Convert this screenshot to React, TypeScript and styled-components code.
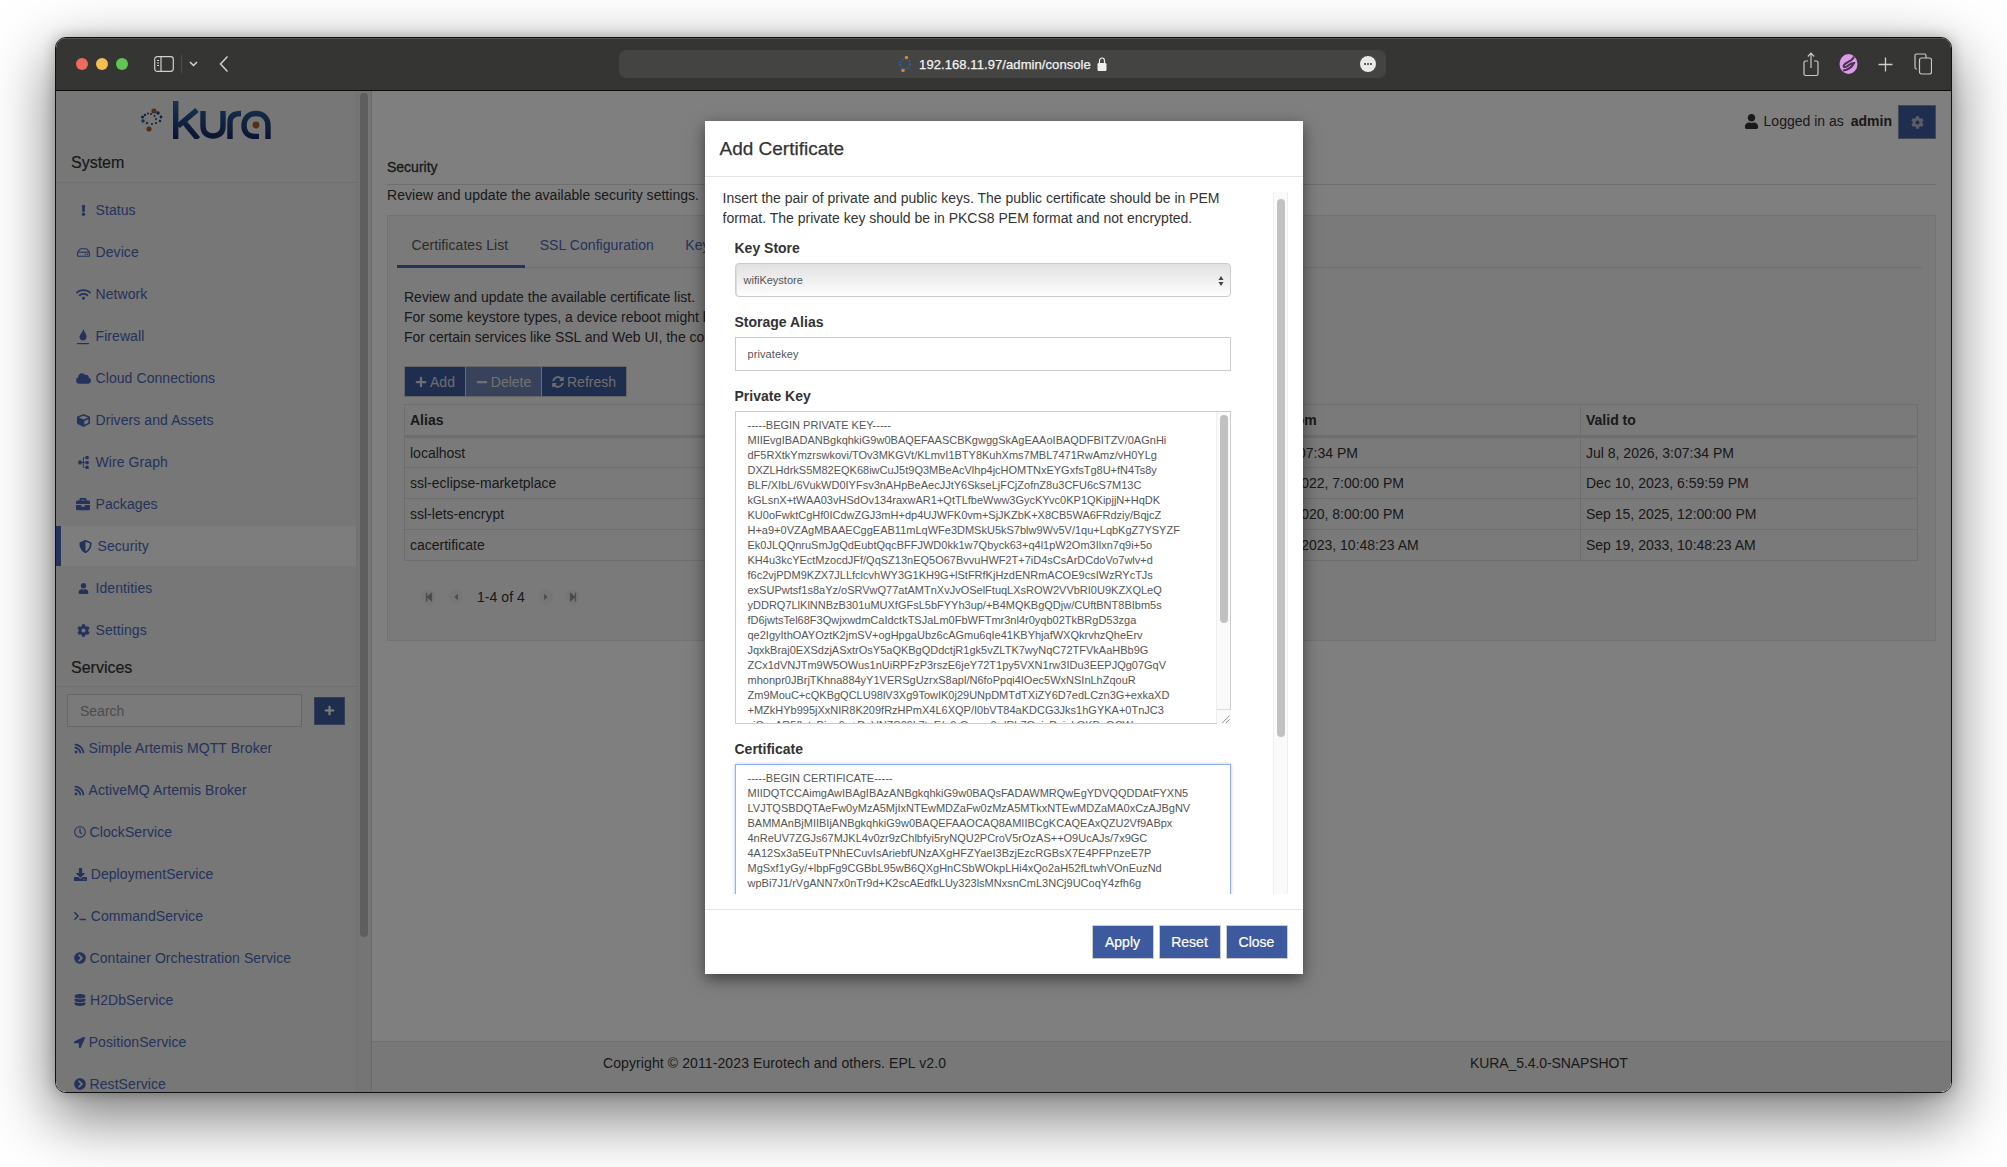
import React from "react";
import styled, { createGlobalStyle } from "styled-components";
import {
  FaBriefcase, FaChevronCircleRight, FaCloud, FaCog, FaCube, FaDatabase, FaDownload, FaExclamation,
  FaLocationArrow, FaMinus, FaPlus, FaRegClock, FaRegHdd, FaRss, FaShieldAlt, FaSitemap, FaStepBackward,
  FaStepForward, FaCaretLeft, FaCaretRight, FaSyncAlt, FaTerminal, FaUser, FaWifi,
} from "react-icons/fa";

const Global = createGlobalStyle`
  html, body { margin: 0; padding: 0; background: #fff; }
  body { font-family: "Liberation Sans", Arial, sans-serif; font-size: 14px; color: #333; }
  * { box-sizing: border-box; }
`;

const Page = styled.div`
  width: 2007px; height: 1167px; padding: 37px 0 0 55px; overflow: hidden;
  background: #fff;
`;
const Win = styled.div`
  width: 1897px; height: 1056px; border: 1px solid #111; border-radius: 11px; overflow: hidden;
  box-shadow: 0 22px 60px 4px rgba(0,0,0,.5), 0 0 14px rgba(0,0,0,.25);
  display: flex; flex-direction: column; background: #fff;
`;
const TitleBar = styled.header`
  flex: none; height: 53px; background: #353533; border-bottom: 1px solid #0c0c0c;
  box-shadow: inset 0 1px 0 #55554f; display: flex; align-items: center;
`;
const LeftTools = styled.div`
  flex: none; width: 563px; padding-left: 20px; display: flex; align-items: center;
`;
const Light = styled.span<{ $c: string }>`
  width: 12px; height: 12px; border-radius: 50%; background: ${p => p.$c}; margin-right: 8px;
`;
const SideToggle = styled.svg`width: 20px; height: 16px; margin-left: 18px; flex: none;`;
const ToolSep = styled.span`width: 1px; height: 18px; background: #4c4c4a; margin: 0 7px;`;
const SmallChevron = styled.svg`width: 9px; height: 6px; flex: none;`;
const BackChevron = styled.svg`width: 10px; height: 18px; margin-left: 21px; flex: none;`;
const Address = styled.div`
  position: relative; flex: none; width: 767px; height: 28px; border-radius: 7px; background: #444442;
  display: flex; align-items: center; justify-content: center; color: #f2f2f2; font-size: 13px; letter-spacing: .08px;
  -webkit-text-stroke: .25px #f2f2f2;
`;
const FavIcon = styled.svg`width: 14px; height: 18px; margin-right: 7px; flex: none;`;
const LockIcon = styled.svg`width: 10px; height: 14px; margin-left: 6px; flex: none;`;
const MoreBtn = styled.span`
  position: absolute; right: 10px; top: 6px; width: 16px; height: 16px; border-radius: 50%; background: #e9e9e9;
  display: flex; align-items: center; justify-content: center; gap: 1px;
  i { width: 2px; height: 2px; border-radius: 50%; background: #333; display: block; }
`;
const RightTools = styled.div`flex: 1; display: flex; align-items: center; justify-content: flex-end; padding-right: 19px;`;
const ToolIcon = styled.svg<{ $ml?: number }>`flex: none; margin-left: ${p => p.$ml ?? 0}px;`;

const Body = styled.div`position: relative; flex: 1; min-height: 0; display: flex;`;
const Sidebar = styled.aside`
  flex: none; width: 300px; background: #eee; display: flex; flex-direction: column; overflow: hidden;
`;
const SideScroll = styled.div`
  flex: none; width: 16px; background: #ebebeb; border-right: 1px solid #d5d5d5; border-left: 1px solid #e3e3e3; padding: 2px 0 0 3px;
`;
const SideThumb = styled.div`width: 8px; height: 844px; border-radius: 4px; background: #bcbcbc;`;
const LogoWrap = styled.div`flex: none; height: 49px; padding-top: 10px; display: flex; justify-content: center; align-items: flex-start;`;
const Heading = styled.h2<{ $mt: number; $pb: number }>`
  flex: none; margin: ${p => p.$mt}px 0 0; padding: 0 0 ${p => p.$pb}px 15px; font-size: 16px; line-height: 20px;
  font-weight: 400; color: #333; border-bottom: 1px solid #ddd; -webkit-text-stroke: .2px #333;
`;
const NavList = styled.nav`flex: none; padding-top: 6px; display: flex; flex-direction: column;`;
const NavItem = styled.a<{ $active?: boolean }>`
  display: flex; align-items: center; height: 40px; margin: 1px 0; padding-left: ${p => (p.$active ? 15 : 18)}px;
  color: #4a66b8; background: ${p => (p.$active ? "#fbfbfb" : "transparent")};
  border-left: ${p => (p.$active ? "5px solid #4a66b8" : "0")};
  font-size: 14px; letter-spacing: .08px;
`;
const NavIconBox = styled.span`
  flex: none; width: 18px; margin-right: 3.5px; display: flex; align-items: center; justify-content: center; font-size: 14px;
`;
const SearchRow = styled.div`flex: none; display: flex; align-items: center; padding: 7px 11px 0; gap: 12px;`;
const SearchInput = styled.input`
  width: 235px; height: 33px; border: 1px solid #ccc; background: #f4f4f4; padding: 0 12px; font: 14px "Liberation Sans", Arial, sans-serif;
  &::placeholder { color: #999; }
`;
const SearchAdd = styled.button`
  flex: none; width: 31px; height: 28px; background: #3e5a9f; border: 1px solid #6a7fb0; color: #fff; padding: 0;
  display: flex; align-items: center; justify-content: center; font-size: 11px;
`;
const ServiceItem = styled.a`
  display: flex; align-items: center; height: 42px; padding-left: 18px; color: #4a66b8; font-size: 14px; flex: none; white-space: nowrap; letter-spacing: .08px;
`;
const ServiceIcon = styled.span<{ $w: number }>`
  flex: none; width: ${p => p.$w}px; display: flex; align-items: center; font-size: 13px;
`;

const Main = styled.main`flex: 1; min-width: 0; background: #fff; display: flex; flex-direction: column;`;
const Content = styled.div`flex: 1; padding: 14px 15px 0; min-height: 0;`;
const UserBar = styled.div`display: flex; justify-content: flex-end; align-items: center; height: 34px;`;
const UserText = styled.span`display: flex; align-items: center; padding-bottom: 2px;`;
const UserIcon = styled.span`font-size: 15px; margin-right: 5px; display: flex; color: #333;`;
const UserName = styled.b`margin: 0 6px 0 7px;`;
const GearBtn = styled.button`
  width: 38px; height: 34px; padding: 0; background: #3e5a9f; border: 1px solid #8a93a8; color: #b6bdcf;
  display: flex; align-items: center; justify-content: center; font-size: 13px;
`;
const PageTitle = styled.h1`
  margin: 18px 0 0; padding-bottom: 7px; height: 28px; font-size: 14px; line-height: 20px; font-weight: 400; border-bottom: 1px solid #ddd;
  -webkit-text-stroke: .3px #333;
`;
const PageDesc = styled.p`margin: 0 0 10px; line-height: 20px; height: 20px; letter-spacing: .03px;`;
const Panel = styled.section`
  border: 1px solid #e5e5e5; background: #f5f5f5; padding: 0 13px 33px 9px;
`;
const Tabs = styled.div`display: flex; height: 52px; border-bottom: 1px solid #ddd;`;
const Tab = styled.a<{ $active?: boolean }>`
  height: 52px; padding: 9px 17px 0 14.5px; display: flex; align-items: center; white-space: nowrap; letter-spacing: .06px;
  color: ${p => (p.$active ? "#555" : "#4a66b8")};
  border-bottom: 3px solid ${p => (p.$active ? "#4a66b8" : "transparent")};
`;
const Pane = styled.div`padding: 19px 4px 0 7px;`;
const PaneLine = styled.p`margin: 0; line-height: 20px; white-space: nowrap;`;
const BtnGroup = styled.div`display: flex; margin-top: 19px; height: 31px; border: 1px solid #ccc; width: fit-content;`;
const ActionBtn = styled.button<{ $off?: boolean; $w: number }>`
  width: ${p => p.$w}px; padding: 0; background: #3e5a9f; color: #ddd; border: 0; border-right: 1px solid #cdd;
  opacity: ${p => (p.$off ? 0.72 : 1)}; display: flex; align-items: center; justify-content: center; gap: 3px;
  font: 14px "Liberation Sans", Arial, sans-serif;
  &:last-child { border-right: 0; }
`;
const Table = styled.table`
  width: 100%; margin-top: 7px; border-collapse: collapse; table-layout: fixed; border: 1px solid #ddd;
`;
const Th = styled.th`
  height: 32px; text-align: left; padding: 0 5px; border: 1px solid #ddd; border-bottom: 3px solid #ddd; font-size: 14px;
`;
const Td = styled.td`height: 31px; padding: 0 5px; border: 1px solid #ddd; white-space: nowrap; overflow: hidden;`;
const Pager = styled.div`display: flex; align-items: center; height: 20px; margin: 26px 0 0 18px;`;
const PagerBtn = styled.span<{ $ml?: number }>`
  width: 14px; height: 16px; border-radius: 50%; margin-left: ${p => p.$ml ?? 0}px; background: #ececec; color: #999;
  display: flex; align-items: center; justify-content: center; font-size: 10px;
`;
const PagerText = styled.span`margin: 0 14px; letter-spacing: .05px;`;
const Footer = styled.footer`
  flex: none; height: 51px; background: #f1f1f1; border-top: 1px solid #e2e2e2; display: flex; align-items: center; padding: 0 0 8px 231px; letter-spacing: .1px;
`;
const FooterRight = styled.span`margin-left: 524px; letter-spacing: -.1px;`;

const Backdrop = styled.div`
  position: absolute; inset: 0; background: rgba(0,0,0,.5); display: flex; justify-content: center; padding-top: 30px;
`;
const Modal = styled.div`
  width: 598px; height: 853px; background: #fff; box-shadow: 0 5px 15px rgba(0,0,0,.5); display: flex; flex-direction: column;
`;
const ModalHead = styled.div`flex: none; height: 56px; border-bottom: 1px solid #e5e5e5; padding-left: 15px; display: flex; align-items: center;`;
const ModalTitle = styled.h3`margin: 0; font-size: 19px; font-weight: 400; color: #333; -webkit-text-stroke: .25px #333;`;
const ModalBody = styled.div`flex: none; height: 706px; margin: 11px 15px 15px 18px; display: flex;`;
const ModalScroll = styled.div`flex: 1; min-width: 0; overflow: hidden;`;
const Intro = styled.p`margin: 0 0 10px; line-height: 20px; width: 520px;`;
const Field = styled.div`position: relative; width: 496px; margin-left: 12px; margin-bottom: 15px;`;
const Label = styled.label`display: block; font-weight: 700; line-height: 20px; margin-bottom: 5px;`;
const SelectBox = styled.div`
  position: relative; height: 34px; border: 1px solid #ccc; border-radius: 4px; padding-left: 8px; display: flex; align-items: center;
  font-size: 11px; color: #555; background: linear-gradient(#e1e1e1, #fdfdfd); box-shadow: inset 1px 0 0 #ddd;
`;
const SelectArrows = styled.svg`position: absolute; right: 6px; top: 11px; width: 6px; height: 12px;`;
const TextInput = styled.input`
  display: block; width: 100%; height: 34px; border: 1px solid #ccc; padding: 0 12px; font: 11px "Liberation Sans", Arial, sans-serif; color: #555; letter-spacing: .1px;
  text-decoration: underline dotted #e08a8a; text-underline-offset: 2px; background: #fff; outline: none;
`;
const Area = styled.textarea<{ $h: number; $focus?: boolean }>`
  display: block; width: 100%; height: ${p => p.$h}px; resize: none; overflow: hidden; white-space: pre; outline: none;
  border: 1px solid ${p => (p.$focus ? "#8fb3e6" : "#ccc")}; box-shadow: ${p => (p.$focus ? "0 0 3px rgba(102,150,230,.5)" : "none")};
  padding: 6px 12px; font: 11px/15px "Liberation Sans", Arial, sans-serif; color: #555; background: #fff;
`;
const AreaTrack = styled.div`
  position: absolute; right: 1px; top: 26px; bottom: 1px; width: 14px; background: #fafafa; border-left: 1px solid #eee; padding: 3px 0 0 3px;
`;
const AreaThumb = styled.div`width: 8px; height: 208px; border-radius: 4px; background: #c1c1c1;`;
const Grip = styled.svg`position: absolute; right: 0; bottom: 0; width: 14px; height: 15px; background: #fafafa; border-top: 1px solid #ddd;`;
const ModalTrack = styled.div`
  flex: none; width: 15px; margin-top: 4px; border-left: 1px solid #eee; border-right: 1px solid #eee; background: #fafafa; padding: 7px 0 0 3px;
`;
const ModalThumb = styled.div`width: 8px; height: 538px; border-radius: 4px; background: #c1c1c1;`;
const ModalFoot = styled.div`
  flex: none; height: 65px; border-top: 1px solid #e5e5e5; padding: 15px 15px 0 0; display: flex; justify-content: flex-end; gap: 5px;
`;
const ModalBtn = styled.button`
  width: 62px; height: 34px; background: #3e5a9f; color: #fff; border: 1px solid #ccc; padding: 0; font: 14px "Liberation Sans", Arial, sans-serif;
  -webkit-text-stroke: .2px #fff;
`;

const KEY = `-----BEGIN PRIVATE KEY-----
MIIEvgIBADANBgkqhkiG9w0BAQEFAASCBKgwggSkAgEAAoIBAQDFBITZV/0AGnHi
dF5RXtkYmzrswkovi/TOv3MKGVt/KLmvI1BTY8KuhXms7MBL7471RwAmz/vH0YLg
DXZLHdrkS5M82EQK68iwCuJ5t9Q3MBeAcVlhp4jcHOMTNxEYGxfsTg8U+fN4Ts8y
BLF/XIbL/6VukWD0IYFsv3nAHpBeAecJJtY6SkseLjFCjZofnZ8u3CFU6cS7M13C
kGLsnX+tWAA03vHSdOv134raxwAR1+QtTLfbeWww3GycKYvc0KP1QKipjjN+HqDK
KU0oFwktCgHf0ICdwZGJ3mH+dp4UJWFK0vm+SjJKZbK+X8CB5WA6FRdziy/BqjcZ
H+a9+0VZAgMBAAECggEAB11mLqWFe3DMSkU5kS7blw9Wv5V/1qu+LqbKgZ7YSYZF
Ek0JLQQnruSmJgQdEubtQqcBFFJWD0kk1w7Qbyck63+q4l1pW2Om3Ilxn7q9i+5o
KH4u3kcYEctMzocdJFf/QqSZ13nEQ5O67BvvuHWF2T+7iD4sCsArDCdoVo7wlv+d
f6c2vjPDM9KZX7JLLfclcvhWY3G1KH9G+lStFRfKjHzdENRmACOE9csIWzRYcTJs
exSUPwtsf1s8aYz/oSRVwQ77atAMTnXvJvOSelFtuqLXsROW2VVbRI0U9KZXQLeQ
yDDRQ7LlKlNNBzB301uMUXfGFsL5bFYYh3up/+B4MQKBgQDjw/CUftBNT8BIbm5s
fD6jwtsTel68F3QwjxwdmCaIdctkTSJaLm0FbWFTmr3nl4r0yqb02TkBRgD53zga
qe2IgyIthOAYOztK2jmSV+ogHpgaUbz6cAGmu6qIe41KBYhjafWXQkrvhzQheErv
JqxkBraj0EXSdzjASxtrOsY5aQKBgQDdctjR1gk5vZLTK7wyNqC72TFVkAaHBb9G
ZCx1dVNJTm9W5OWus1nUiRPFzP3rszE6jeY72T1py5VXN1rw3IDu3EEPJQg07GqV
mhonpr0JBrjTKhna884yY1VERSgUzrxS8apl/N6foPpqi4IOec5WxNSInLhZqouR
Zm9MouC+cQKBgQCLU98lV3Xg9TowIK0j29UNpDMTdTXiZY6D7edLCzn3G+exkaXD
+MZkHYb995jXxNIR8K209fRzHPmX4L6XQP/I0bVT84aKDCG3Jks1hGYKA+0TnJC3
viGccAR5flqtvPjpq6u+DoVNZS09k7tqE/e0rQcccc0rdRh7QnjcDsjekOKBgQCW`;

const CERT = `-----BEGIN CERTIFICATE-----
MIIDQTCCAimgAwIBAgIBAzANBgkqhkiG9w0BAQsFADAWMRQwEgYDVQQDDAtFYXN5
LVJTQSBDQTAeFw0yMzA5MjIxNTEwMDZaFw0zMzA5MTkxNTEwMDZaMA0xCzAJBgNV
BAMMAnBjMIIBIjANBgkqhkiG9w0BAQEFAAOCAQ8AMIIBCgKCAQEAxQZU2Vf9ABpx
4nReUV7ZGJs67MJKL4v0zr9zChlbfyi5ryNQU2PCroV5rOzAS++O9UcAJs/7x9GC
4A12Sx3a5EuTPNhECuvIsAriebfUNzAXgHFZYaeI3BzjEzcRGBsX7E4PFPnzeE7P
MgSxf1yGy/+lbpFg9CGBbL95wB6QXgHnCSbWOkpLHi4xQo2aH52fLtwhVOnEuzNd
wpBi7J1/rVgANN7x0nTr9d+K2scAEdfkLUy323lsMNxsnCmL3NCj9UCoqY4zfh6g`;

const FlameIcon = () => (
  <svg width="14" height="17" viewBox="0 0 14 17">
    <path d="M7.500 1C8 4 10.500 5.500 10.500 8.500C10.500 11 9 12.500 7 12.500C5 12.500 3.500 11 3.500 9C3.500 7 5 6 5.800 4.500C6.500 3.500 7 2.200 7.500 1Z" fill="currentColor" />
    <rect x="1" y="15" width="12" height="1.200" fill="currentColor" />
  </svg>
);

const systemNav: { icon: React.ReactNode; label: string; active?: boolean }[] = [
  { icon: <FaExclamation size={11} />, label: "Status" },
  { icon: <FaRegHdd size={13} />, label: "Device" },
  { icon: <FaWifi size={15} />, label: "Network" },
  { icon: <FlameIcon />, label: "Firewall" },
  { icon: <FaCloud size={15} />, label: "Cloud Connections" },
  { icon: <FaCube size={13} />, label: "Drivers and Assets" },
  { icon: <FaSitemap size={13} style={{ transform: "rotate(-90deg)" }} />, label: "Wire Graph" },
  { icon: <FaBriefcase size={14} />, label: "Packages" },
  { icon: <FaShieldAlt size={13} />, label: "Security", active: true },
  { icon: <FaUser size={11} />, label: "Identities" },
  { icon: <FaCog size={13} />, label: "Settings" },
];

const services: { icon: React.ReactNode; w: number; label: string }[] = [
  { icon: <FaRss size={11} />, w: 14.5, label: "Simple Artemis MQTT Broker" },
  { icon: <FaRss size={11} />, w: 14.5, label: "ActiveMQ Artemis Broker" },
  { icon: <FaRegClock size={12} />, w: 15.5, label: "ClockService" },
  { icon: <FaDownload size={13} />, w: 16.700, label: "DeploymentService" },
  { icon: <FaTerminal size={12} />, w: 16.700, label: "CommandService" },
  { icon: <FaChevronCircleRight size={12} />, w: 15.5, label: "Container Orchestration Service" },
  { icon: <FaDatabase size={12} />, w: 16, label: "H2DbService" },
  { icon: <FaLocationArrow size={11} />, w: 14.700, label: "PositionService" },
  { icon: <FaChevronCircleRight size={12} />, w: 15.5, label: "RestService" },
];

const certs = [
  ["localhost", "Jul 8, 3:07:34 PM", "Jul 8, 2026, 3:07:34 PM"],
  ["ssl-eclipse-marketplace", "Dec 9, 2022, 7:00:00 PM", "Dec 10, 2023, 6:59:59 PM"],
  ["ssl-lets-encrypt", "Sep 3, 2020, 8:00:00 PM", "Sep 15, 2025, 12:00:00 PM"],
  ["cacertificate", "Sep 19, 2023, 10:48:23 AM", "Sep 19, 2033, 10:48:23 AM"],
];

const swirl: [number, number, number, string][] = [
  [13, 3, 2.600, "#a3602a"], [8, 21, 2.600, "#a3602a"],
  [17, 5, 1.700, "#1f3f86"], [20, 9, 1.400, "#1f3f86"], [19, 13, 1.200, "#1f3f86"], [15, 15, 1.100, "#1f3f86"],
  [11, 16, 1.100, "#1f3f86"], [6, 15, 1.300, "#3162a5"], [2, 13, 1.700, "#3162a5"], [1.500, 9, 1.500, "#1f3f86"],
  [4, 7, 1.200, "#1f3f86"], [7, 5.500, 1, "#1f3f86"], [10, 6, 1, "#1f3f86"], [13.500, 8, 1, "#1f3f86"], [15, 11, 1, "#1f3f86"],
];

const KuraLogo = () => (
  <>
    <svg width="22" height="28" viewBox="0 0 22 28" style={{ marginTop: 7, marginRight: 10, flex: "none" }}>
      {swirl.map(([x, y, r, c], i) => <circle key={i} cx={x} cy={y} r={r} fill={c} />)}
    </svg>
    <svg width="98" height="38" viewBox="0 0 98 38" style={{ flex: "none" }}>
      <defs>
        <linearGradient id="kg" gradientUnits="userSpaceOnUse" x1="0" y1="0" x2="0" y2="38">
          <stop offset="0" stopColor="#2f6aa3" />
          <stop offset="1" stopColor="#1b2563" />
        </linearGradient>
      </defs>
      <g fill="none" stroke="url(#kg)" strokeWidth="5.400">
        <path d="M2.700 0V38" />
        <path d="M24 9L5 25M11 21L25 38" />
        <path d="M30 10V25C30 32 34 35 40 35C46 35 50 32 50 25V10" />
        <path d="M57 38V21C57 15 61 12.500 68 12.500" />
        <path d="M95 38V25C95 17 90 12.500 83 12.500C76 12.500 71 17 71 25C71 32 76 35.500 82 35.500H86" />
      </g>
      <circle cx="83" cy="24" r="3.400" fill="#a3602a" />
    </svg>
  </>
);

export default function App() {
  return (
    <Page>
      <Global />
      <Win>
        <TitleBar>
          <LeftTools>
            <Light $c="#ec6a5e" /><Light $c="#f4bf4f" /><Light $c="#61c554" />
            <SideToggle viewBox="0 0 20 16" fill="none" stroke="#cfcfcd" strokeWidth="1.200">
              <rect x=".7" y=".7" width="18.600" height="14.600" rx="2.500" />
              <path d="M7 1V15M3 4.500H5M3 7H5M3 9.500H5" />
            </SideToggle>
            <ToolSep />
            <SmallChevron viewBox="0 0 9 6" fill="none" stroke="#d5d5d3" strokeWidth="1.500"><path d="M1 1L4.500 4.500L8 1" /></SmallChevron>
            <BackChevron viewBox="0 0 10 18" fill="none" stroke="#cfcfcd" strokeWidth="1.500"><path d="M8.500 1.500L1.500 9L8.500 16.500" /></BackChevron>
          </LeftTools>
          <Address>
            <FavIcon viewBox="0 0 14 18">
              <circle cx="7" cy="9" r="5" fill="none" stroke="#2a5aa5" strokeWidth="2" strokeDasharray="2 1.300" />
              <circle cx="8.500" cy="2.500" r="1.800" fill="#d9822b" />
              <circle cx="5" cy="15.500" r="1.800" fill="#d9822b" />
            </FavIcon>
            192.168.11.97/admin/console
            <LockIcon viewBox="0 0 10 14">
              <path d="M2.500 6V3.800C2.500 2.200 3.500 1 5 1C6.500 1 7.500 2.200 7.500 3.800V6" fill="none" stroke="#eee" strokeWidth="1.200" />
              <rect x="0.500" y="6" width="9" height="8" rx="1.200" fill="#eee" />
            </LockIcon>
            <MoreBtn><i /><i /><i /></MoreBtn>
          </Address>
          <RightTools>
            <ToolIcon width="16" height="25" viewBox="0 0 16 25" fill="none" stroke="#c9c9c7" strokeWidth="1.200">
              <path d="M5 9H2.500A1.500 1.500 0 0 0 1 10.500V22A1.500 1.500 0 0 0 2.500 23.500H13.500A1.500 1.500 0 0 0 15 22V10.500A1.500 1.500 0 0 0 13.500 9H11" />
              <path d="M8 16V1.500M4.800 4.500L8 1.200L11.200 4.500" />
            </ToolIcon>
            <ToolIcon $ml={20} width="19" height="20" viewBox="0 0 19 20">
              <ellipse cx="9.500" cy="10" rx="9" ry="10" fill="#dc9be6" />
              <path d="M15 2.500C14 7 8 7.500 5 11C3.500 13 6 14 8.500 12C10 10.800 13 9 15 9C13 13 9 16 4 16.500" fill="none" stroke="#4d3053" strokeWidth="2" />
            </ToolIcon>
            <ToolIcon $ml={20} width="15" height="15" viewBox="0 0 15 15" stroke="#cfcfcd" strokeWidth="1.300"><path d="M7.500 .5V14.500M.5 7.500H14.500" /></ToolIcon>
            <ToolIcon $ml={21} width="18" height="22" viewBox="0 0 18 22" fill="none" stroke="#c9c9c7" strokeWidth="1.200">
              <path d="M3 16H2.500A1.500 1.500 0 0 1 1 14.500V2.500A1.500 1.500 0 0 1 2.500 1H10.500A1.500 1.500 0 0 1 12 2.500V5" />
              <rect x="5.500" y="5" width="12" height="16" rx="2" />
            </ToolIcon>
          </RightTools>
        </TitleBar>

        <Body>
          <Sidebar>
            <LogoWrap><KuraLogo /></LogoWrap>
            <Heading $mt={13} $pb={9}>System</Heading>
            <NavList>
              {systemNav.map(n => (
                <NavItem key={n.label} $active={n.active}>
                  <NavIconBox>{n.icon}</NavIconBox>{n.label}
                </NavItem>
              ))}
            </NavList>
            <Heading $mt={7} $pb={8}>Services</Heading>
            <SearchRow>
              <SearchInput placeholder="Search" />
              <SearchAdd><FaPlus /></SearchAdd>
            </SearchRow>
            {services.map(s => (
              <ServiceItem key={s.label}>
                <ServiceIcon $w={s.w}>{s.icon}</ServiceIcon>{s.label}
              </ServiceItem>
            ))}
          </Sidebar>
          <SideScroll><SideThumb /></SideScroll>

          <Main>
            <Content>
              <UserBar>
                <UserText>
                  <UserIcon><FaUser /></UserIcon>
                  Logged in as<UserName>admin</UserName>
                </UserText>
                <GearBtn><FaCog /></GearBtn>
              </UserBar>
              <PageTitle>Security</PageTitle>
              <PageDesc>Review and update the available security settings.</PageDesc>
              <Panel>
                <Tabs>
                  <Tab $active>Certificates List</Tab>
                  <Tab>SSL Configuration</Tab>
                  <Tab>Keystore Configuration</Tab>
                </Tabs>
                <Pane>
                  <PaneLine>Review and update the available certificate list.</PaneLine>
                  <PaneLine>For some keystore types, a device reboot might be required to apply the changes.</PaneLine>
                  <PaneLine>For certain services like SSL and Web UI, the configuration must be updated to use the new certificate.</PaneLine>
                  <BtnGroup>
                    <ActionBtn $w={61}><FaPlus size={12} />Add</ActionBtn>
                    <ActionBtn $w={76} $off><FaMinus size={12} />Delete</ActionBtn>
                    <ActionBtn $w={84}><FaSyncAlt size={12} />Refresh</ActionBtn>
                  </BtnGroup>
                  <Table>
                    <colgroup><col /><col style={{ width: 337 }} /><col style={{ width: 337 }} /></colgroup>
                    <thead><tr><Th>Alias</Th><Th>Valid from</Th><Th>Valid to</Th></tr></thead>
                    <tbody>
                      {certs.map(c => <tr key={c[0]}>{c.map(v => <Td key={v}>{v}</Td>)}</tr>)}
                    </tbody>
                  </Table>
                  <Pager>
                    <PagerBtn><FaStepBackward /></PagerBtn>
                    <PagerBtn $ml={13}><FaCaretLeft /></PagerBtn>
                    <PagerText>1-4 of 4</PagerText>
                    <PagerBtn><FaCaretRight /></PagerBtn>
                    <PagerBtn $ml={13}><FaStepForward /></PagerBtn>
                  </Pager>
                </Pane>
              </Panel>
            </Content>
            <Footer>
              Copyright © 2011-2023 Eurotech and others. EPL v2.0
              <FooterRight>KURA_5.4.0-SNAPSHOT</FooterRight>
            </Footer>
          </Main>

          <Backdrop>
            <Modal>
              <ModalHead><ModalTitle>Add Certificate</ModalTitle></ModalHead>
              <ModalBody>
                <ModalScroll>
                  <Intro>Insert the pair of private and public keys. The public certificate should be in PEM format. The private key should be in PKCS8 PEM format and not encrypted.</Intro>
                  <Field>
                    <Label>Key Store</Label>
                    <SelectBox>
                      wifiKeystore
                      <SelectArrows viewBox="0 0 6 12" fill="#444"><path d="M3 1L5.500 5H.5ZM3 11L.5 7H5.500Z" /></SelectArrows>
                    </SelectBox>
                  </Field>
                  <Field>
                    <Label>Storage Alias</Label>
                    <TextInput readOnly value="privatekey" />
                  </Field>
                  <Field>
                    <Label>Private Key</Label>
                    <Area $h={313} readOnly value={KEY} />
                    <AreaTrack><AreaThumb /></AreaTrack>
                    <Grip viewBox="0 0 14 15" stroke="#888" strokeWidth="1"><path d="M13 6L5 14M13 10L9 14" /></Grip>
                  </Field>
                  <Field>
                    <Label>Certificate</Label>
                    <Area $h={180} $focus readOnly value={CERT} />
                  </Field>
                </ModalScroll>
                <ModalTrack><ModalThumb /></ModalTrack>
              </ModalBody>
              <ModalFoot>
                <ModalBtn>Apply</ModalBtn>
                <ModalBtn>Reset</ModalBtn>
                <ModalBtn>Close</ModalBtn>
              </ModalFoot>
            </Modal>
          </Backdrop>
        </Body>
      </Win>
    </Page>
  );
}
